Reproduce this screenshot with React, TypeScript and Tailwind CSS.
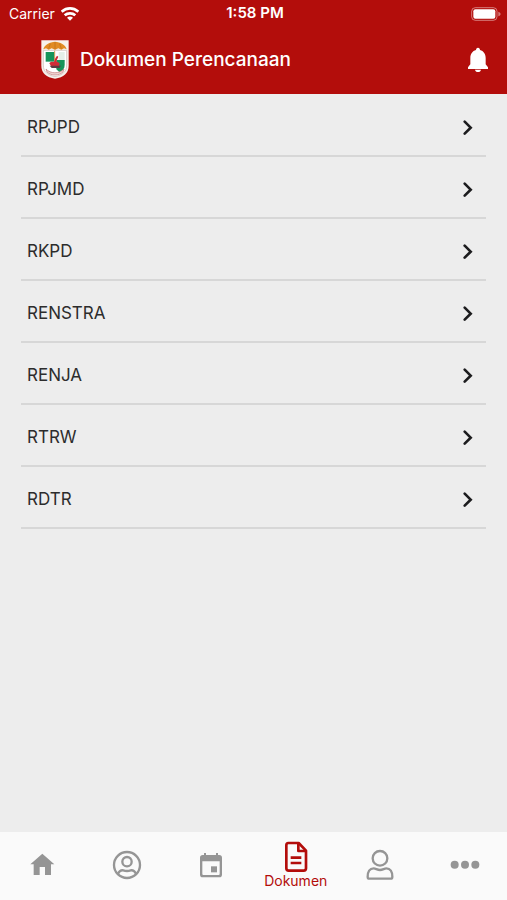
import { useState } from "react";
import type { ReactNode } from "react";

const documents = ["RPJPD", "RPJMD", "RKPD", "RENSTRA", "RENJA", "RTRW", "RDTR"];

/* =====================================
    ICONS
===================================== */
const WifiIcon = () => (
  <svg className="w-[18px] h-[14px]" viewBox="0 0 54 42" aria-hidden="true">
    <g fill="none" stroke="#fff" strokeWidth="8">
      <path d="M2 14C17 1 37 1 52 14" />
      <path d="M11 25C20 17 34 17 43 25" />
    </g>
    <path d="M18 32c5-5 13-5 18 0l-9 9z" fill="#fff" />
  </svg>
);

const BatteryIcon = () => (
  <svg className="w-[30px] h-[14px]" viewBox="0 0 90 42" aria-hidden="true">
    <rect x="2" y="2" width="76" height="38" rx="11" fill="none" stroke="#fff" strokeOpacity="0.45" strokeWidth="3" />
    <rect x="7" y="7" width="66" height="28" rx="6" fill="#fff" />
    <path d="M82 14c9 3 9 11 0 14z" fill="#fff" fillOpacity="0.45" />
  </svg>
);

const BellIcon = () => (
  <svg className="w-[22px] h-[26px]" viewBox="0 0 66 78" fill="#fff" aria-hidden="true">
    <path d="M33 2c4 0 6 3 6 7 11 3 17 12 17 24v19l7 9v5H3v-5l7-9V33C10 21 16 12 27 9c0-4 2-7 6-7z" />
    <path d="M24 68h18c-1 5-4 7-9 7s-8-2-9-7z" />
  </svg>
);

const CrestIcon = () => (
  <svg className="w-7 h-[39px]" viewBox="0 0 84 117" aria-hidden="true">
    <path d="M1 1h82v76c0 22-15 35-41 39C16 112 1 99 1 77z" fill="#f7f1ec" />
    <path d="M7 31h70v44c0 20-12 30-35 35C19 105 7 95 7 75z" fill="#fff" stroke="#c9b8b0" strokeWidth="2" />
    <path d="M14 36h27v29H14z" fill="#17945a" />
    <path d="M53 36h18v29H53z" fill="#e4efe8" />
    <path d="M46 60h25v14c0 12-6 19-16 22l-9-8z" fill="#17945a" />
    <path d="M41 32v46" stroke="#d9a15b" strokeWidth="3" />
    <path d="M7 28C10 14 27 6 42 5c15 1 32 9 35 23l-8-3-8 4-9-4-10 4-10-4-9 4-8-4z" fill="#e18b24" />
    <path d="M42 6v22M28 11l-5 15M56 11l5 15" stroke="#b96d1c" strokeWidth="2" />
    <path d="M25 70c4-5 9-5 14-4l4-11 5-8 4 3-6 14 10 6-2 8-8 4H32z" fill="#d12b36" />
    <path d="M26 77h34l-5 7H32z" fill="#5b3a40" />
    <path d="M15 87c13 15 40 15 54 0l-3 9c-13 12-35 12-48 0z" fill="#efd5d2" stroke="#c2787a" strokeWidth="2" />
  </svg>
);

const ChevronIcon = () => (
  <svg className="w-3 h-[18px]" viewBox="0 0 36 54" fill="none" aria-hidden="true">
    <path d="M8 8l18 18L8 44" stroke="#1c1c1e" strokeWidth="8" strokeLinecap="round" strokeLinejoin="miter" />
  </svg>
);

const HomeIcon = () => (
  <svg className="w-[26px] h-[26px]" viewBox="0 0 78 78" fill="currentColor" aria-hidden="true">
    <path d="M40 5L4 37h10v32h18V45h16v24h18V37h10z" />
  </svg>
);

const AccountIcon = () => (
  <svg className="w-[30px] h-[30px]" viewBox="0 0 90 90" fill="none" stroke="currentColor" strokeWidth="7" aria-hidden="true">
    <circle cx="45" cy="45" r="39" />
    <circle cx="45" cy="35" r="14" />
    <path d="M17 73c4-9 10-13 17-12 8 3 14 3 22 0 7-1 13 3 17 12" />
  </svg>
);

const CalendarIcon = () => (
  <svg className="w-6 h-[26px]" viewBox="0 0 72 78" fill="currentColor" aria-hidden="true">
    <path
      fillRule="evenodd"
      d="M15 3h6v6h30V3h6v6h4c5 0 8 3 8 8v51c0 5-3 8-8 8H11c-5 0-8-3-8-8V17c0-5 3-8 8-8h4zM10 28v38c0 2 1 3 3 3h46c2 0 3-1 3-3V28z"
    />
    <path d="M36 43h18v18H36z" />
  </svg>
);

const DocumentIcon = () => (
  <svg className="w-6 h-8" viewBox="0 0 72 96" fill="none" stroke="currentColor" strokeWidth="8" strokeLinejoin="round" aria-hidden="true">
    <path d="M13 6h31l22 23v53c0 5-2 7-7 7H14c-5 0-7-2-7-7V13c0-5 2-7 6-7z" />
    <path d="M43 8v22h21M20 50h32M20 66h32" />
  </svg>
);

const PersonIcon = () => (
  <svg className="w-[28px] h-[32px]" viewBox="0 0 84 96" fill="none" stroke="currentColor" strokeWidth="7" aria-hidden="true">
    <circle cx="42" cy="28" r="22" />
    <path d="M5 83c0-14 6-25 18-25 6 0 11 5 19 5s13-5 19-5c12 0 18 11 18 25 0 4-2 6-5 6H10c-3 0-5-2-5-6z" />
  </svg>
);

const MoreIcon = () => (
  <svg className="w-[30px] h-[10px]" viewBox="0 0 90 30" fill="currentColor" aria-hidden="true">
    <circle cx="14" cy="14" r="12" />
    <circle cx="45" cy="14" r="12" />
    <circle cx="76" cy="14" r="12" />
  </svg>
);

const tabs: { label: string; icon: ReactNode }[] = [
  { label: "Beranda", icon: <HomeIcon /> },
  { label: "Akun", icon: <AccountIcon /> },
  { label: "Agenda", icon: <CalendarIcon /> },
  { label: "Dokumen", icon: <DocumentIcon /> },
  { label: "Profil", icon: <PersonIcon /> },
  { label: "Lainnya", icon: <MoreIcon /> },
];

const App = () => {
  const [active, setActive] = useState("Dokumen");

  return (
    <div className="min-h-screen flex flex-col bg-[#ededed] font-[Inter,sans-serif]">
      {/* HEADER */}
      <header className="bg-[#b30d0b] text-white">
        <div className="grid grid-cols-3 items-center h-[27px] pl-[9px] pr-[6px] text-[14px]">
          <div className="flex items-center gap-[6px]">
            <span>Carrier</span>
            <WifiIcon />
          </div>
          <span className="text-center text-[15px] font-semibold">1:58 PM</span>
          <div className="flex justify-end">
            <BatteryIcon />
          </div>
        </div>

        <div className="flex items-start h-[67px] pt-[13px] pl-[41px] pr-[18px]">
          <CrestIcon />
          <h1 className="flex-1 ml-[11px] text-[19px] leading-10 font-medium">
            Dokumen Perencanaan
          </h1>
          <button className="mt-[7px] cursor-pointer" aria-label="Notifikasi">
            <BellIcon />
          </button>
        </div>
      </header>

      {/* LIST */}
      <main className="flex-1">
        <ul className="pt-[1px] px-[21px]">
          {documents.map((item) => (
            <li key={item} className="h-[62px] border-b-2 border-[#d7d7d7]">
              <button className="flex items-center justify-between w-full h-full pt-[5px] pl-[6px] pr-3 text-[17px] text-[#2c2c2c] cursor-pointer">
                <span>{item}</span>
                <ChevronIcon />
              </button>
            </li>
          ))}
        </ul>
      </main>

      {/* TAB BAR */}
      <nav className="grid grid-cols-6 h-[68px] pb-[3px] bg-[#fafafa]">
        {tabs.map((tab) => (
          <button
            key={tab.label}
            aria-label={tab.label}
            onClick={() => setActive(tab.label)}
            className={`flex flex-col items-center justify-center cursor-pointer ${
              active === tab.label ? "text-[#b30d0b]" : "text-[#959595]"
            }`}
          >
            {tab.icon}
            {active === tab.label && (
              <span className="text-[14px] leading-4">{tab.label}</span>
            )}
          </button>
        ))}
      </nav>
    </div>
  );
};

export default App;
